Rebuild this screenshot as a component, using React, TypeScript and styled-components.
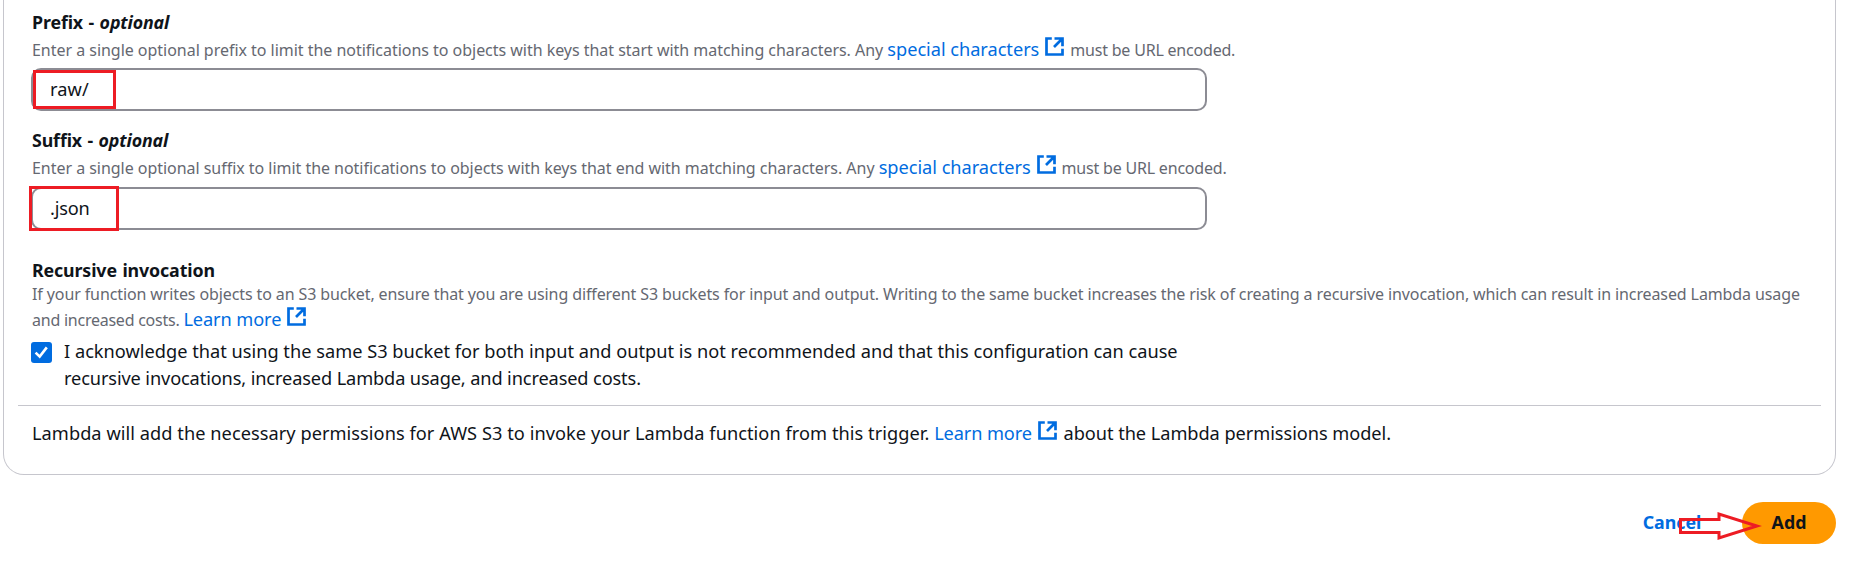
import React from "react";
import styled, { createGlobalStyle } from "styled-components";

const GlobalStyle = createGlobalStyle`
  *, *::before, *::after { box-sizing: border-box; }
  body {
    margin: 0;
    background: #fff;
    color: #0f141a;
    font-family: "Noto Sans", "Open Sans", sans-serif;
    font-size: 18.2px;
    overflow: hidden;
  }
`;

const Page = styled.main`
  width: 1852px;
  height: 577px;
  padding: 0 16px 0 3px;
`;

const Card = styled.section`
  height: 475px;
  padding: 9px 14px 0;
  border: 1px solid #c6c6cd;
  border-top: 0;
  border-radius: 0 0 21px 21px;
`;

const Content = styled.div`
  padding: 0 13px 0 14px;
`;

const Field = styled.div`
  display: flex;
  flex-direction: column;
  margin-bottom: 16px;
`;

const Label = styled.div<{ $height?: number }>`
  height: ${(p) => p.$height ?? 26}px;
  line-height: 26px;
  font-size: 17.8px;
  font-weight: 700;
  letter-spacing: -0.12px;
  word-spacing: 1px;
  white-space: nowrap;
`;

const Description = styled.p<{ $height: number; $line?: number }>`
  height: ${(p) => p.$height}px;
  margin: 0;
  color: #656871;
  font-size: 16px;
  line-height: ${(p) => p.$line ?? 24}px;
  white-space: nowrap;
`;

const Span = styled.span<{ $track: number }>`
  letter-spacing: ${(p) => p.$track}px;
`;

const Link = styled.a<{ $track?: number }>`
  color: #006ce0;
  font-size: 18.2px;
  line-height: 18px;
  letter-spacing: ${(p) => p.$track ?? -0.03}px;
  text-decoration: none;
`;

const IconSvg = styled.svg`
  width: 19px;
  height: 19px;
  margin: 0 2px 0 6px;
  vertical-align: baseline;
`;

const InputBox = styled.div`
  position: relative;
  display: flex;
  align-items: center;
  width: 1176px;
  height: 43px;
  margin-left: -1px;
  padding: 0 0 1px 17px;
  border: 2px solid #8c8c94;
  border-radius: 10px;
`;

const Highlight = styled.div<{ $x: number; $y: number; $w: number; $h: number }>`
  position: absolute;
  left: ${(p) => p.$x}px;
  top: ${(p) => p.$y}px;
  width: ${(p) => p.$w}px;
  height: ${(p) => p.$h}px;
  border: 3px solid #ed1c24;
`;

const Recursive = styled.div`
  padding-top: 11px;
`;

const CheckRow = styled.label`
  display: flex;
  gap: 12px;
  margin: 5px 0 0 -1px;
  line-height: 27px;
  white-space: nowrap;
`;

const CheckBox = styled.span`
  display: flex;
  width: 21px;
  height: 21px;
  margin-top: 4px;
  border-radius: 3px;
  background: #006ce0;
`;

const Divider = styled.hr`
  height: 1px;
  margin: 13px 0 14px;
  border: 0;
  background: #c6c6cd;
`;

const Permissions = styled.p`
  height: 26px;
  margin: 0;
  line-height: 26px;
  white-space: nowrap;
`;

const Actions = styled.footer`
  position: relative;
  display: flex;
  justify-content: flex-end;
  margin-top: 27px;
`;

const Button = styled.button<{ $primary?: boolean }>`
  width: ${(p) => (p.$primary ? 94 : 100)}px;
  height: 42px;
  padding: 0 0 2px;
  border: 0;
  border-radius: 21px;
  background: ${(p) => (p.$primary ? "#ff9900" : "transparent")};
  color: ${(p) => (p.$primary ? "#0f141a" : "#006ce0")};
  font: 700 17.8px "Noto Sans", sans-serif;
  letter-spacing: 0;
`;

const Spacer = styled.span`
  width: 20px;
`;

const Arrow = styled.svg`
  position: absolute;
  left: 1675px;
  top: 7px;
  width: 88px;
  height: 34px;
`;

const ExternalIcon = () => (
  <IconSvg viewBox="0 0 19 19" fill="none" stroke="#006ce0" strokeWidth="2.7">
    <path d="M6.8 1.5H1.5V17.5H17.5V11.8" />
    <path d="M9.5 1.5H17.5V9.2M17.2 1.8L9 10" />
  </IconSvg>
);

export default function App() {
  return (
    <>
      <GlobalStyle />
      <Page>
        <Card>
          <Content>
            <Field>
              <Label>Prefix - <em>optional</em></Label>
              <Description $height={33} $line={30}>
                <Span $track={-0.03}>
                  Enter a single optional prefix to limit the notifications to objects with keys that start with matching characters. Any{" "}
                </Span>
                <Link>special characters</Link><ExternalIcon />
                <Span $track={-0.2}> must be URL encoded.</Span>
              </Description>
              <InputBox>
                <Span $track={0.1}>raw/</Span>
                <Highlight $x={0} $y={0} $w={83} $h={39} />
              </InputBox>
            </Field>
            <Field>
              <Label>Suffix - <em>optional</em></Label>
              <Description $height={34} $line={30}>
                <Span $track={-0.035}>
                  Enter a single optional suffix to limit the notifications to objects with keys that end with matching characters. Any{" "}
                </Span>
                <Link>special characters</Link><ExternalIcon />
                <Span $track={-0.2}> must be URL encoded.</Span>
              </Description>
              <InputBox>
                <Span $track={-0.2}>.json</Span>
                <Highlight $x={-4} $y={-3} $w={90} $h={45} />
              </InputBox>
            </Field>
            <Recursive>
              <Label $height={25}>Recursive invocation</Label>
              <Description $height={51} $line={25}>
                <Span $track={-0.11}>
                  If your function writes objects to an S3 bucket, ensure that you are using different S3 buckets for input and output. Writing to the same bucket increases the risk of creating a recursive invocation, which can result in increased Lambda usage
                </Span>
                <br />
                <Span $track={-0.24}>and increased costs. </Span>
                <Link $track={-0.1}>Learn more</Link><ExternalIcon />
              </Description>
              <CheckRow>
                <CheckBox>
                  <svg width="21" height="21" viewBox="0 0 21 21" fill="none" stroke="#fff" strokeWidth="2.6">
                    <path d="M4.6 10.6L8.7 14.6L15.8 5.4" />
                  </svg>
                </CheckBox>
                <span>
                  <Span $track={0.01}>
                    I acknowledge that using the same S3 bucket for both input and output is not recommended and that this configuration can cause
                  </Span>
                  <br />
                  <Span $track={-0.12}>recursive invocations, increased Lambda usage, and increased costs.</Span>
                </span>
              </CheckRow>
            </Recursive>
          </Content>
          <Divider />
          <Content>
            <Permissions>
              <Span $track={0.052}>
                Lambda will add the necessary permissions for AWS S3 to invoke your Lambda function from this trigger.{" "}
              </Span>
              <Link $track={-0.12}>Learn more</Link><ExternalIcon />
              <Span $track={-0.05}> about the Lambda permissions model.</Span>
            </Permissions>
          </Content>
        </Card>
        <Actions>
          <Button>Cancel</Button>
          <Spacer />
          <Button $primary>Add</Button>
          <Arrow viewBox="0 0 88 34" fill="none" stroke="#ed1c24" strokeWidth="3">
            <path d="M2.5 10.5H41V5L79 17L41 29V23.5H2.5Z" />
          </Arrow>
        </Actions>
      </Page>
    </>
  );
}
